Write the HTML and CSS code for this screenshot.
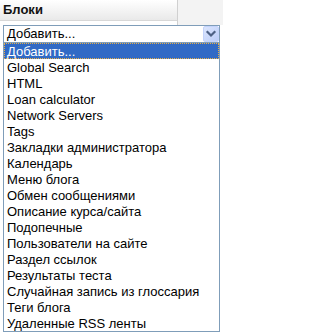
FILE: index.html
```html
<!DOCTYPE html>
<html lang="ru">
<head>
<meta charset="utf-8">
<title>Блоки</title>
<link rel="stylesheet" href="styles.css">
</head>
<body>
<div class="block">
  <div class="top">
    <div class="head-col">
      <div class="header">Блоки</div>
    </div>
    <div class="side"></div>
  </div>
  <div class="select">
    <span class="select-text">Добавить...</span>
    <span class="select-btn">
      <svg width="16" height="16" viewBox="0 0 16 16" aria-hidden="true">
        <polyline points="4.5,6 8,9.5 11.5,6" fill="none" stroke="#4d6185" stroke-width="2.2" stroke-linecap="square"/>
      </svg>
    </span>
  </div>
  <ul class="list">
    <li class="item active">Добавить...</li>
    <li class="item">Global Search</li>
    <li class="item">HTML</li>
    <li class="item">Loan calculator</li>
    <li class="item">Network Servers</li>
    <li class="item">Tags</li>
    <li class="item">Закладки администратора</li>
    <li class="item">Календарь</li>
    <li class="item">Меню блога</li>
    <li class="item">Обмен сообщениями</li>
    <li class="item">Описание курса/сайта</li>
    <li class="item">Подопечные</li>
    <li class="item">Пользователи на сайте</li>
    <li class="item">Раздел ссылок</li>
    <li class="item">Результаты теста</li>
    <li class="item">Случайная запись из глоссария</li>
    <li class="item">Теги блога</li>
    <li class="item">Удаленные RSS ленты</li>
  </ul>
</div>
</body>
</html>
```
FILE: styles.css
```css
html, body {
  margin: 0;
  padding: 0;
  background: #ffffff;
}
body {
  font-family: "Liberation Sans", Arial, sans-serif;
  font-size: 13px;
  color: #000000;
}
.block {
  width: 223px;
}
.top {
  display: flex;
  height: 25px;
}
.head-col {
  width: 177px;
  border-right: 1px solid #d0d0d0;
  background: #ffffff;
}
.header {
  height: 20px;
  line-height: 20px;
  padding-left: 3px;
  font-weight: bold;
  font-size: 13px;
  color: #111111;
  background: linear-gradient(#ffffff, #e9e9e9);
  border-bottom: 1px solid #d8d8d8;
}
.side {
  flex: 1;
  background: #f3f3f3;
}
.select {
  display: flex;
  align-items: stretch;
  box-sizing: border-box;
  margin-left: 3px;
  width: 217px;
  height: 18px;
  border: 1px solid #7f9db9;
  background: #ffffff;
}
.select-text {
  flex: 1;
  line-height: 16px;
  padding-left: 3px;
  white-space: nowrap;
}
.select-btn {
  box-sizing: border-box;
  width: 16px;
  height: 16px;
  display: flex;
  align-items: center;
  justify-content: center;
  border: 1px solid #c3d3fb;
  border-radius: 2px;
  background: linear-gradient(135deg, #dbe5fd, #bccef9);
}
.select-btn svg {
  display: block;
  margin: -1px;
}
.list {
  list-style: none;
  margin: 0 0 0 3px;
  padding: 0;
  box-sizing: border-box;
  width: 217px;
  border: 1px solid #7f9db9;
  border-top: none;
  background: #ffffff;
}
.item {
  height: 16px;
  box-sizing: border-box;
  padding: 1px 0 0 3px;
  line-height: 15px;
  white-space: nowrap;
}
.item.active {
  background: #316ac5;
  color: #ffffff;
  outline: 1px dotted #e8b048;
  outline-offset: -1px;
}
```
